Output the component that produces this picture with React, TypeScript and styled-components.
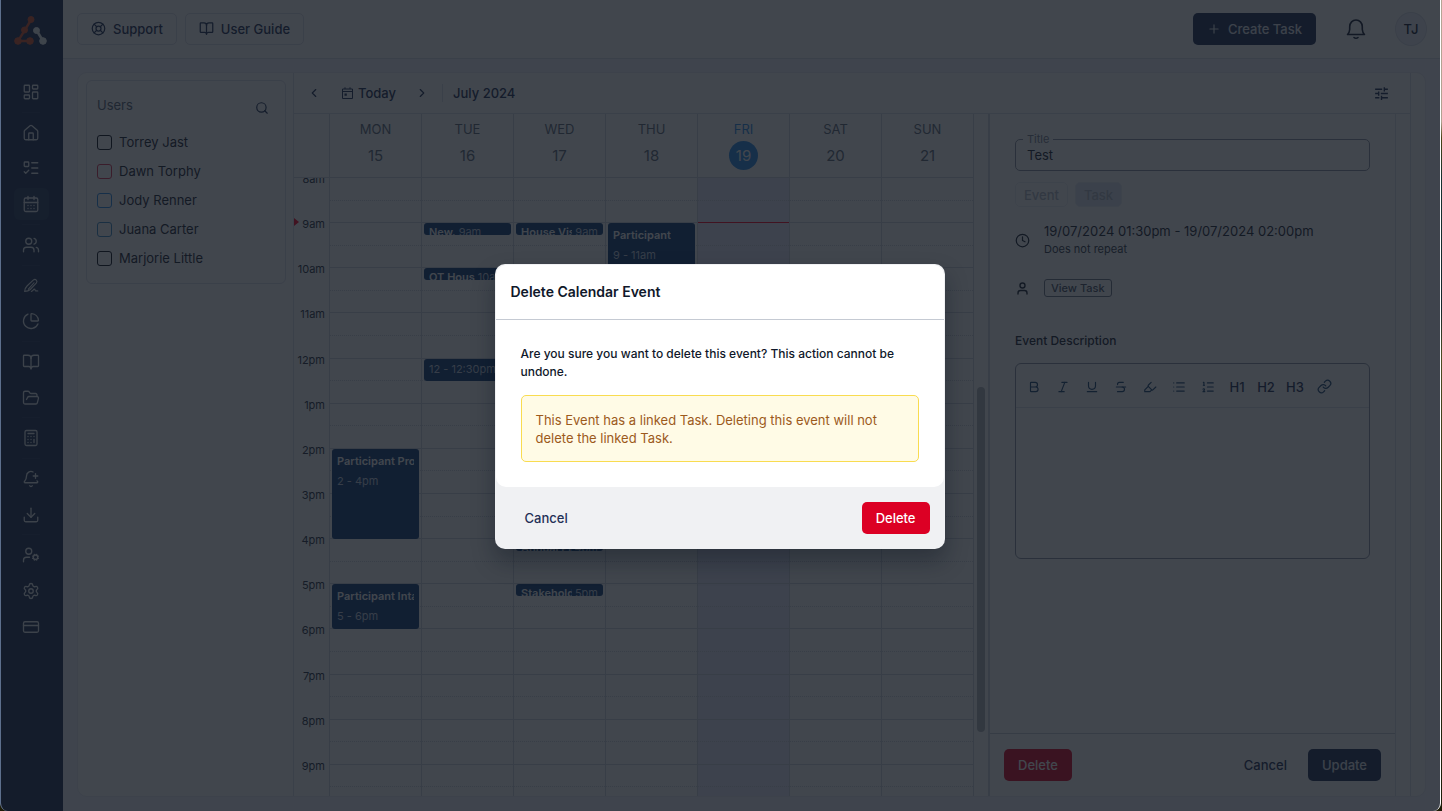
import React from 'react';
import styled, { createGlobalStyle, css } from 'styled-components';
import {
  LayoutDashboard, House, ListTodo, CalendarDays, Users, ChartPie, BookOpen, FolderOpen,
  Calculator, BellPlus, Download, UserCog, Settings, CreditCard, LifeBuoy, Plus,
  ChevronLeft, ChevronRight, Search, Clock, Bold, Italic, Underline, Strikethrough,
  Highlighter, List, ListOrdered, Link,
} from 'lucide-react';
import { MdTune } from 'react-icons/md';

const GlobalStyle = createGlobalStyle`
  * { box-sizing: border-box; }
  html, body { margin: 0; }
  body {
    font-family: Inter, "Liberation Sans", sans-serif;
    font-size: 13px;
    line-height: 18px;
    color: #1c2434;
    background: linear-gradient(#b5a595 0%, #b0a090 15%, #4a4215 17%, #16302f 22%, #14262a 38%, #4d4a20 44%, #2a2c10 70%, #1d1c08 100%);
  }
  button, input, textarea { font: inherit; color: inherit; }
  h1, h2, p, ul { margin: 0; padding: 0; font-weight: inherit; font-size: inherit; }
`;

const line = '#dcdee8';
const gridLine = '#d2d6de';
const navy = '#1f3056';

const Window = styled.div`
  position: relative;
  display: flex;
  min-height: 100vh;
  margin-right: 1px;
  border-left: 1px solid #5d6f8c;
  border-right: 1px solid #ffffff;
  border-radius: 0 0 8px 8px;
  overflow: hidden;
  background: #f3f3fc;
`;

const Sidebar = styled.aside`
  width: 62px;
  flex: none;
  display: flex;
  flex-direction: column;
  align-items: center;
  background: ${navy};
  padding: 14px 2px 0 0;
`;

const LogoSvg = styled.svg`
  width: 36px;
  height: 32px;
  margin-bottom: 30px;
`;

const Nav = styled.nav`
  height: 567px;
  display: flex;
  flex-direction: column;
  align-items: center;
  justify-content: space-between;
`;

const NavLink = styled.a<{ $active?: boolean }>`
  width: 35px;
  height: 32px;
  flex: none;
  display: flex;
  align-items: center;
  justify-content: center;
  border-radius: 6px;
  color: #e6e9ef;
  background: ${(p) => (p.$active ? '#2c3d62' : 'transparent')};
`;

const NavDivider = styled.div`
  width: 18px;
  height: 1px;
  background: #2a3b60;
`;

const Main = styled.div`
  flex: 1;
  min-width: 0;
  display: flex;
  flex-direction: column;
`;

const Header = styled.header`
  height: 59px;
  flex: none;
  display: flex;
  align-items: center;
  gap: 8px;
  padding: 0 13px 1px 14px;
  background: #ffffff;
  border-bottom: 1px solid ${line};
`;

const buttonBase = css`
  display: inline-flex;
  align-items: center;
  justify-content: center;
  gap: 7px;
  height: 32px;
  padding: 0 13px;
  border-radius: 5px;
  border: 1px solid transparent;
  font-weight: 500;
  white-space: nowrap;
  cursor: pointer;
`;

const Button = styled.button<{ $kind: 'outline' | 'primary' | 'danger' | 'ghost' }>`
  ${buttonBase}
  ${(p) => p.$kind === 'outline' && css`background: #ffffff; border-color: ${line}; color: ${navy};`}
  ${(p) => p.$kind === 'primary' && css`background: ${navy}; color: #e4e7ee;`}
  ${(p) => p.$kind === 'danger' && css`background: #dc0024; color: #ffffff;`}
  ${(p) => p.$kind === 'ghost' && css`background: transparent; color: ${navy};`}
`;

const HeaderEnd = styled.div`
  margin-left: auto;
  display: flex;
  align-items: center;
`;

const IconButton = styled.button`
  display: inline-flex;
  align-items: center;
  justify-content: center;
  width: 24px;
  height: 24px;
  padding: 0;
  border: 0;
  background: transparent;
  color: ${navy};
  cursor: pointer;
`;

const BellButton = styled(IconButton)`
  margin: 0 27px 0 28px;
  color: #141c33;
`;

const Avatar = styled.button`
  width: 32px;
  height: 34px;
  padding: 0;
  border: 1px solid ${line};
  border-radius: 50%;
  background: #eff0fb;
  font-weight: 500;
  color: #141c33;
`;

const Card = styled.main`
  flex: 1;
  display: flex;
  min-height: 0;
  margin: 13px 14px 14px;
  border: 1px solid #e8e9f2;
  border-radius: 10px;
  background: #ffffff;
  overflow: hidden;
`;

const UsersColumn = styled.div`
  width: 215px;
  flex: none;
  padding: 7px 7px 7px 8px;
`;

const UsersBox = styled.section`
  height: 204px;
  padding: 14px 10px;
  border: 1px solid ${line};
  border-radius: 6px;
`;

const UsersHead = styled.div`
  display: flex;
  justify-content: space-between;
  margin-bottom: 13px;
  color: #5a6478;
  line-height: 20px;
  ${IconButton} { margin: 1px 1px 0 0; }
`;

const UserLabel = styled.label`
  display: flex;
  align-items: center;
  gap: 7px;
  margin-bottom: 11px;
`;

const CheckBox = styled.input<{ $color: string }>`
  appearance: none;
  width: 15px;
  height: 15px;
  margin: 0;
  border: 1px solid ${(p) => p.$color};
  border-radius: 3px;
`;

const Workspace = styled.div`
  flex: 1;
  min-width: 0;
  display: flex;
  flex-direction: column;
  margin-right: 14px;
  border-left: 1px solid ${line};
  border-right: 1px solid ${line};
`;

const Toolbar = styled.div`
  height: 41px;
  flex: none;
  display: flex;
  align-items: center;
  padding: 0 17px 0 8px;
  border-bottom: 1px solid ${line};
`;

const TodayButton = styled.button`
  display: inline-flex;
  align-items: center;
  gap: 5px;
  margin: 0 14px 0 16px;
  padding: 0;
  border: 0;
  background: transparent;
  font-weight: 500;
  color: ${navy};
`;

const Period = styled.h1`
  margin-left: 8px;
  padding-left: 10px;
  border-left: 1px solid ${line};
  font-weight: 500;
  color: ${navy};
`;

const ToolbarEnd = styled.div`
  display: flex;
  margin-left: auto;
`;

const Split = styled.div`
  flex: 1;
  min-height: 0;
  display: flex;
`;

const Calendar = styled.section`
  flex: 1;
  min-width: 0;
  display: flex;
  border-right: 2px solid ${gridLine};
`;

const CalendarMain = styled.div`
  flex: 1;
  min-width: 0;
  display: flex;
  flex-direction: column;
`;

const columns = css`
  display: grid;
  grid-template-columns: 35px repeat(7, minmax(0, 1fr));
`;

const DayHeads = styled.div`
  ${columns}
  height: 64px;
  flex: none;
  border-bottom: 1px solid ${gridLine};
`;

const DayHead = styled.div<{ $today?: boolean }>`
  display: flex;
  flex-direction: column;
  align-items: center;
  gap: 3px;
  padding-top: 6px;
  border-left: 1px solid ${gridLine};
  color: ${(p) => (p.$today ? '#2b8ce8' : '#616a7b')};
`;

const DayNumber = styled.span<{ $today?: boolean }>`
  display: flex;
  align-items: center;
  justify-content: center;
  width: 29px;
  height: 29px;
  border-radius: 50%;
  font-size: 15px;
  background: ${(p) => (p.$today ? '#2b8ce8' : 'transparent')};
  color: ${(p) => (p.$today ? '#ffffff' : 'inherit')};
`;

const TimeScroller = styled.div`
  flex: 1 0 0;
  min-height: 0;
  overflow: hidden;
`;

const TimeGrid = styled.div`
  ${columns}
  grid-template-rows: 632px;
`;

const quarters = css`
  display: grid;
  grid-template-rows: repeat(56, minmax(0, 1fr));
  grid-template-columns: minmax(0, 1fr);
`;

const Axis = styled.div`
  ${quarters}
  position: relative;
  padding-right: 4px;
  text-align: right;
  font-size: 11px;
  color: #283042;
`;

const HourLabel = styled.span<{ $row: number }>`
  grid-row: ${(p) => p.$row};
  margin-top: -9px;
  line-height: 20px;
`;

const NowMarker = styled.span`
  position: absolute;
  left: 0;
  top: 40px;
  border: 4px solid transparent;
  border-left: 5px solid #ff0024;
  border-right: 0;
`;

const DayColumn = styled.div<{ $today?: boolean }>`
  ${quarters}
  border-left: 1px solid ${gridLine};
  background: ${(p) => (p.$today ? '#e8ecfc' : 'transparent')};
`;

const HalfHour = styled.div<{ $row: number; $now?: boolean }>`
  grid-column: 1;
  grid-row: ${(p) => `${p.$row * 2 + 1} / span 2`};
  border-bottom: 1px ${(p) => (p.$row % 2 ? 'solid' : 'dotted')} ${(p) => (p.$now ? '#ff0024' : gridLine)};
`;

const EventCard = styled.button<{ $start: number; $span: number }>`
  grid-column: 1;
  grid-row: ${(p) => `${p.$start + 1} / span ${p.$span}`};
  display: flex;
  flex-direction: ${(p) => (p.$span > 3 ? 'column' : 'row')};
  align-items: flex-start;
  gap: ${(p) => (p.$span > 3 ? 2 : 3)}px;
  min-height: 12px;
  min-width: 0;
  margin: 0 2px;
  padding: ${(p) => (p.$span > 3 ? '3px 5px' : p.$span > 1 ? '1px 5px' : '0 5px')};
  border: 0;
  border-radius: 3px;
  overflow: hidden;
  background: #0f3c78;
  color: #ffffff;
  font-size: 11px;
  line-height: 18px;
  text-align: left;
  white-space: nowrap;
`;

const EventTitle = styled.strong`
  min-width: 0;
  max-width: 100%;
  overflow: hidden;
  font-weight: 600;
`;

const EventTime = styled.span`
  flex: none;
  color: #c8d3e4;
`;

const ScrollTrack = styled.div`
  width: 15px;
  flex: none;
  display: flex;
  justify-content: center;
  align-items: flex-end;
  padding-bottom: 64px;
  border-left: 1px solid ${gridLine};
`;

const ScrollThumb = styled.div`
  width: 8px;
  height: 345px;
  border-radius: 4px;
  background: #b3b7be;
`;

const EventPanel = styled.section`
  width: 406px;
  flex: none;
  display: flex;
  flex-direction: column;
  margin-right: 14px;
  border-right: 1px solid ${line};
`;

const PanelBody = styled.div`
  flex: 1;
  padding: 19px 25px;
`;

const Field = styled.fieldset`
  height: 38px;
  margin: 0;
  padding: 0 7px;
  border: 1px solid #8d93a3;
  border-radius: 5px;
`;

const Legend = styled.legend`
  padding: 0 4px;
  font-size: 11px;
  line-height: 12px;
  color: #7a8192;
`;

const FieldInput = styled.input`
  display: block;
  width: 100%;
  height: 20px;
  padding: 0 4px;
  border: 0;
  outline: 0;
  background: transparent;
  color: #1c2434;
`;

const Chips = styled.div`
  display: flex;
  gap: 7px;
  margin: 11px 0 15px;
`;

const Chip = styled.button<{ $on?: boolean }>`
  height: 25px;
  padding: 0 8px;
  border: 1px solid #eceef5;
  border-radius: 5px;
  background: ${(p) => (p.$on ? '#dfe6f2' : 'transparent')};
  color: #b4bac8;
  font-weight: 500;
`;

const Detail = styled.div`
  display: flex;
  align-items: center;
  gap: 14px;
  margin-bottom: 21px;
  svg { flex: none; }
`;

const Small = styled.p`
  font-size: 11px;
  color: #333b4c;
`;

const ViewTask = styled.button`
  height: 18px;
  padding: 0 6px;
  border: 1px solid #6f7789;
  border-radius: 3px;
  background: transparent;
  font-size: 11px;
  line-height: 14px;
  font-weight: 500;
  color: #4a5366;
`;

const SectionTitle = styled.label`
  display: block;
  margin: 35px 0 13px;
  font-size: 12px;
  font-weight: 500;
`;

const Editor = styled.div`
  height: 196px;
  display: flex;
  flex-direction: column;
  border: 1px solid #8d93a3;
  border-radius: 6px;
`;

const EditorTools = styled.div`
  height: 44px;
  flex: none;
  display: flex;
  align-items: center;
  gap: 5px;
  padding: 2px 6px 0;
  border-bottom: 1px solid ${line};
`;

const EditorArea = styled.textarea`
  flex: 1;
  padding: 10px;
  border: 0;
  outline: 0;
  resize: none;
  background: transparent;
`;

const FormatTool = styled(IconButton)`
  font-weight: 500;
  svg { color: #1d4673; }
`;

const PanelFooter = styled.footer`
  display: flex;
  align-items: center;
  gap: 7px;
  height: 63px;
  padding: 0 14px;
  border-top: 1px solid #c6cad8;
  ${Button}:first-child { margin-right: auto; }
`;

const Overlay = styled.div`
  position: absolute;
  inset: 0;
  display: flex;
  align-items: center;
  justify-content: center;
  padding: 2px 2px 0 0;
  background: rgba(18, 24, 33, 0.8);
`;

const Dialog = styled.div`
  width: 450px;
  max-width: 100%;
  padding: 1px;
  border-radius: 10px;
  background: #f0f1f3;
  box-shadow: 0 12px 22px rgba(10, 16, 28, 0.35);
`;

const DialogContent = styled.div`
  border-radius: 10px;
  background: #ffffff;
`;

const DialogTitle = styled.h2`
  padding: 18px 15px;
  border-bottom: 1px solid #c5cad3;
  font-size: 14px;
  line-height: 18px;
  font-weight: 600;
  color: #10182a;
`;

const DialogBody = styled.div`
  padding: 25px;
`;

const DialogText = styled.p`
  font-size: 12px;
  font-weight: 500;
  color: #10182a;
`;

const Alert = styled.p`
  margin-top: 14px;
  padding: 15px 14px 14px;
  border: 1px solid #f9dc50;
  border-radius: 5px;
  background: #fffbe6;
  color: #9c5a1c;
`;

const DialogFooter = styled.div`
  display: flex;
  align-items: center;
  justify-content: space-between;
  padding: 15px 14px 14px 15px;
`;

const Logo = () => (
  <LogoSvg viewBox="0 0 36 32" aria-hidden="true">
    <g fill="#d9512c" stroke="#d9512c">
      <path d="M18 6 5 27H17" fill="none" strokeWidth="2.4" />
      <circle cx="18" cy="5.5" r="3" /><circle cx="11.500" cy="16" r="3" />
      <circle cx="5" cy="27" r="3.300" /><circle cx="17" cy="27" r="3.300" />
    </g>
    <g fill="#f1f2f4" stroke="#f1f2f4">
      <path d="M24 17 30 27" strokeWidth="2.600" />
      <circle cx="23.500" cy="16.500" r="3" /><circle cx="30" cy="27" r="3.300" />
    </g>
  </LogoSvg>
);

const stroke = { fill: 'none', stroke: 'currentColor', strokeLinecap: 'round', strokeLinejoin: 'round' } as const;

const SignIcon = () => (
  <svg width="18" height="18" viewBox="0 0 24 24" strokeWidth="1.500" {...stroke}>
    <path d="M3.500 20.500c3.500 0 5.500-.5 7.500-2.500l8-8.500c2.500-3-1-6.500-4-4L7 13c-2 2-3.500 4.500-3.500 7.500Zm5-3L16 9M12.500 20.500c2 0 2.500-3 4-3s.5 2.500 2 2.500 1-.5 2.500 0" />
  </svg>
);

const BellIcon = () => (
  <svg width="24" height="24" viewBox="0 0 24 24" strokeWidth="1.600" {...stroke}>
    <path d="M3.500 17.500h17c-1.500-1.200-2-2.600-2.200-5V9.700C18.300 5.800 15.500 3 12 3S5.700 5.800 5.700 9.700v2.800c-.2 2.400-.7 3.800-2.200 5Z" />
    <path d="M10 20.500c1 .9 3 .9 4 0" />
  </svg>
);

const TodayIcon = () => (
  <svg width="11" height="12" viewBox="0 0 11 12" fill="none" stroke="currentColor">
    <path d="M.5 2h10v9.500H.5zM.5 4.500h10M3 .3V2M8 .3V2" />
    <path d="M2.500 6.500h2.300v2.300H2.500z" fill="currentColor" stroke="none" />
  </svg>
);

const PersonIcon = () => (
  <svg width="15" height="15" viewBox="0 0 15 15" strokeWidth="1.400" {...stroke}>
    <circle cx="7.500" cy="4.500" r="2.500" />
    <path d="M3 13v-1c0-1.700 1-2.500 2.500-2.500h4c1.500 0 2.500.8 2.500 2.500v1" />
  </svg>
);

const navItems: [string, React.ComponentType<any> | null][] = [
  ['Dashboard', LayoutDashboard], ['', null], ['Home', House], ['Tasks', ListTodo],
  ['Calendar', CalendarDays], ['', null], ['Participants', Users], ['', null], ['Sign', SignIcon],
  ['Reports', ChartPie], ['', null], ['Library', BookOpen], ['Files', FolderOpen], ['', null],
  ['Calculator', Calculator], ['', null], ['Alerts', BellPlus], ['Downloads', Download], ['', null],
  ['Accounts', UserCog], ['Settings', Settings], ['Billing', CreditCard],
];

const users = [
  ['Torrey Jast', '#0a0f1c'], ['Dawn Torphy', '#dd3355'], ['Jody Renner', '#2b8ce8'],
  ['Juana Carter', '#3d8cc8'], ['Marjorie Little', '#0a0f1c'],
];

type Entry = { title?: string; time: string; start: number; span: number };
const days: { name: string; date: number; today?: boolean; events: Entry[] }[] = [
  { name: 'MON', date: 15, events: [
    { title: 'Participant Profile', time: '2 - 4pm', start: 24, span: 8 },
    { title: 'Participant Intake', time: '5 - 6pm', start: 36, span: 4 },
  ] },
  { name: 'TUE', date: 16, events: [
    { title: 'New.', time: '9am', start: 4, span: 1 },
    { title: 'OT Hous', time: '10am', start: 8, span: 1 },
    { time: '12 - 12:30pm', start: 16, span: 2 },
  ] },
  { name: 'WED', date: 17, events: [
    { title: 'House Visit', time: '9am', start: 4, span: 1 },
    { title: 'Annual Planning', time: '4pm', start: 32, span: 1 },
    { title: 'Stakeholder', time: '5pm', start: 36, span: 1 },
  ] },
  { name: 'THU', date: 18, events: [{ title: 'Participant', time: '9 - 11am', start: 4, span: 8 }] },
  { name: 'FRI', date: 19, today: true, events: [] },
  { name: 'SAT', date: 20, events: [] },
  { name: 'SUN', date: 21, events: [] },
];

const hours = ['8am', '9am', '10am', '11am', '12pm', '1pm', '2pm', '3pm', '4pm', '5pm', '6pm', '7pm', '8pm', '9pm'];
const halfHours = Array.from({ length: 28 }, (_, i) => i);

const tools: [string, React.ComponentType<any>][] = [
  ['Bold', Bold], ['Italic', Italic], ['Underline', Underline], ['Strikethrough', Strikethrough],
  ['Highlight', Highlighter], ['Bullet list', List], ['Numbered list', ListOrdered],
];

export default function App() {
  return (
    <>
      <GlobalStyle />
      <Window>
        <Sidebar>
          <Logo />
          <Nav>
            {navItems.map(([label, Icon], i) =>
              Icon ? (
                <NavLink key={i} href="#" aria-label={label} $active={label === 'Calendar'}>
                  <Icon size={18} strokeWidth={1.75} />
                </NavLink>
              ) : (
                <NavDivider key={i} />
              ),
            )}
          </Nav>
        </Sidebar>
        <Main>
          <Header>
            <Button $kind="outline"><LifeBuoy size={15} />Support</Button>
            <Button $kind="outline"><BookOpen size={15} />User Guide</Button>
            <HeaderEnd>
              <Button $kind="primary"><Plus size={14} />Create Task</Button>
              <BellButton aria-label="Notifications"><BellIcon /></BellButton>
              <Avatar>TJ</Avatar>
            </HeaderEnd>
          </Header>
          <Card>
            <UsersColumn>
              <UsersBox>
                <UsersHead>
                  Users
                  <IconButton aria-label="Search users"><Search size={14} /></IconButton>
                </UsersHead>
                {users.map(([name, color]) => (
                  <UserLabel key={name}>
                    <CheckBox type="checkbox" $color={color} />
                    {name}
                  </UserLabel>
                ))}
              </UsersBox>
            </UsersColumn>
            <Workspace>
              <Toolbar>
                <IconButton aria-label="Previous week"><ChevronLeft size={14} /></IconButton>
                <TodayButton><TodayIcon />Today</TodayButton>
                <IconButton aria-label="Next week"><ChevronRight size={14} /></IconButton>
                <Period>July 2024</Period>
                <ToolbarEnd>
                  <IconButton aria-label="Filters"><MdTune size={17} /></IconButton>
                </ToolbarEnd>
              </Toolbar>
              <Split>
                <Calendar>
                  <CalendarMain>
                    <DayHeads>
                      <span />
                      {days.map((d) => (
                        <DayHead key={d.name} $today={d.today}>
                          {d.name}
                          <DayNumber $today={d.today}>{d.date}</DayNumber>
                        </DayHead>
                      ))}
                    </DayHeads>
                    <TimeScroller>
                      <TimeGrid>
                        <Axis>
                          {hours.map((h, i) => <HourLabel key={h} $row={i * 4 + 1}>{h}</HourLabel>)}
                          <NowMarker />
                        </Axis>
                        {days.map((d) => (
                          <DayColumn key={d.name} $today={d.today}>
                            {halfHours.map((i) => <HalfHour key={i} $row={i} $now={d.today && i === 1} />)}
                            {d.events.map((e) => (
                              <EventCard key={e.start} $start={e.start} $span={e.span}>
                                {e.title && <EventTitle>{e.title}</EventTitle>}
                                <EventTime>{e.time}</EventTime>
                              </EventCard>
                            ))}
                          </DayColumn>
                        ))}
                      </TimeGrid>
                    </TimeScroller>
                  </CalendarMain>
                  <ScrollTrack><ScrollThumb /></ScrollTrack>
                </Calendar>
                <EventPanel>
                  <PanelBody>
                    <Field>
                      <Legend><label htmlFor="event-title">Title</label></Legend>
                      <FieldInput id="event-title" defaultValue="Test" />
                    </Field>
                    <Chips>
                      <Chip>Event</Chip>
                      <Chip $on>Task</Chip>
                    </Chips>
                    <Detail>
                      <Clock size={15} />
                      <div>
                        <p>19/07/2024 01:30pm - 19/07/2024 02:00pm</p>
                        <Small>Does not repeat</Small>
                      </div>
                    </Detail>
                    <Detail>
                      <PersonIcon />
                      <ViewTask>View Task</ViewTask>
                    </Detail>
                    <SectionTitle htmlFor="event-description">Event Description</SectionTitle>
                    <Editor>
                      <EditorTools>
                        {tools.map(([label, Icon]) => (
                          <FormatTool key={label} aria-label={label}><Icon size={14} /></FormatTool>
                        ))}
                        {['H1', 'H2', 'H3'].map((h) => <FormatTool key={h}>{h}</FormatTool>)}
                        <FormatTool aria-label="Link"><Link size={15} /></FormatTool>
                      </EditorTools>
                      <EditorArea id="event-description" />
                    </Editor>
                  </PanelBody>
                  <PanelFooter>
                    <Button $kind="danger">Delete</Button>
                    <Button $kind="ghost">Cancel</Button>
                    <Button $kind="primary">Update</Button>
                  </PanelFooter>
                </EventPanel>
              </Split>
            </Workspace>
          </Card>
        </Main>
        <Overlay>
          <Dialog role="dialog" aria-modal="true" aria-labelledby="dialog-title">
            <DialogContent>
              <DialogTitle id="dialog-title">Delete Calendar Event</DialogTitle>
              <DialogBody>
                <DialogText>
                  Are you sure you want to delete this event? This action cannot be undone.
                </DialogText>
                <Alert>
                  This Event has a linked Task. Deleting this event will not delete the linked Task.
                </Alert>
              </DialogBody>
            </DialogContent>
            <DialogFooter>
              <Button $kind="ghost">Cancel</Button>
              <Button $kind="danger">Delete</Button>
            </DialogFooter>
          </Dialog>
        </Overlay>
      </Window>
    </>
  );
}
